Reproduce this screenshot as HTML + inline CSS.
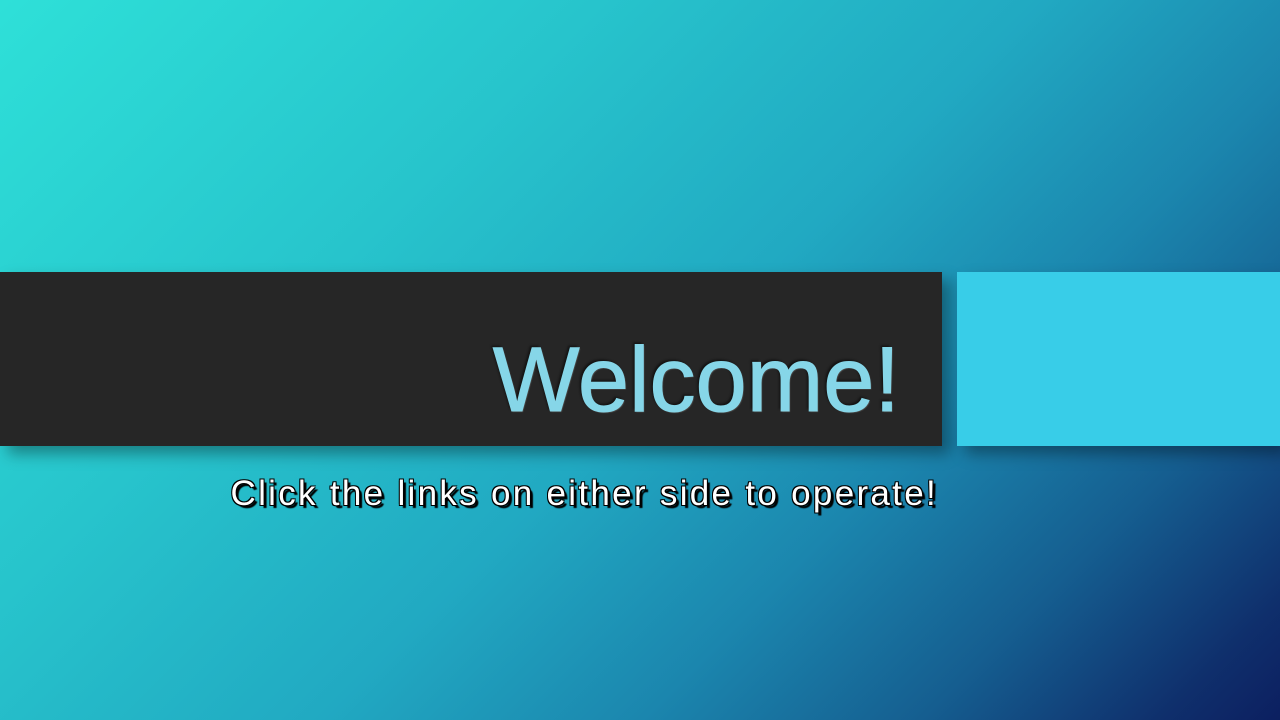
<!DOCTYPE html>
<html><head><style>
html,body{margin:0;padding:0}
body{width:1280px;height:720px;overflow:hidden;position:relative;
background:linear-gradient(135deg,#2ee0d8 0%,#27c4cc 30%,#21a9c2 52%,#1b86ae 68%,#155e90 82%,#0f2f6c 94%,#0c1f60 100%);
font-family:"Liberation Sans",sans-serif}
.bar{position:absolute;left:0;top:272px;width:942px;height:174px;background:#262626;box-shadow:8px 8px 14px rgba(0,0,0,.35)}
.box{position:absolute;left:957px;top:272px;width:323px;height:174px;background:#38cde8;box-shadow:8px 8px 14px rgba(0,0,0,.35)}
.title{position:absolute;right:380px;top:325px;font-size:92px;line-height:110px;color:#86d6e8;
text-shadow:-2px -2px 2px rgba(0,0,0,.5),1px 1px 1px rgba(255,255,255,.2);-webkit-text-stroke:1px #86d6e8}
.sub{position:absolute;right:342px;top:472px;font-size:35px;line-height:44px;color:#fff;white-space:nowrap;letter-spacing:2.3px;
text-shadow:-1px -1px 0 #000,1px -1px 0 #000,-1px 1px 0 #000,1px 1px 0 #000,3px 3px 1px #000}
</style></head><body>
<div class="bar"></div><div class="box"></div>
<div class="title">Welcome!</div>
<div class="sub">Click the links on either side to operate!</div>
</body></html>
